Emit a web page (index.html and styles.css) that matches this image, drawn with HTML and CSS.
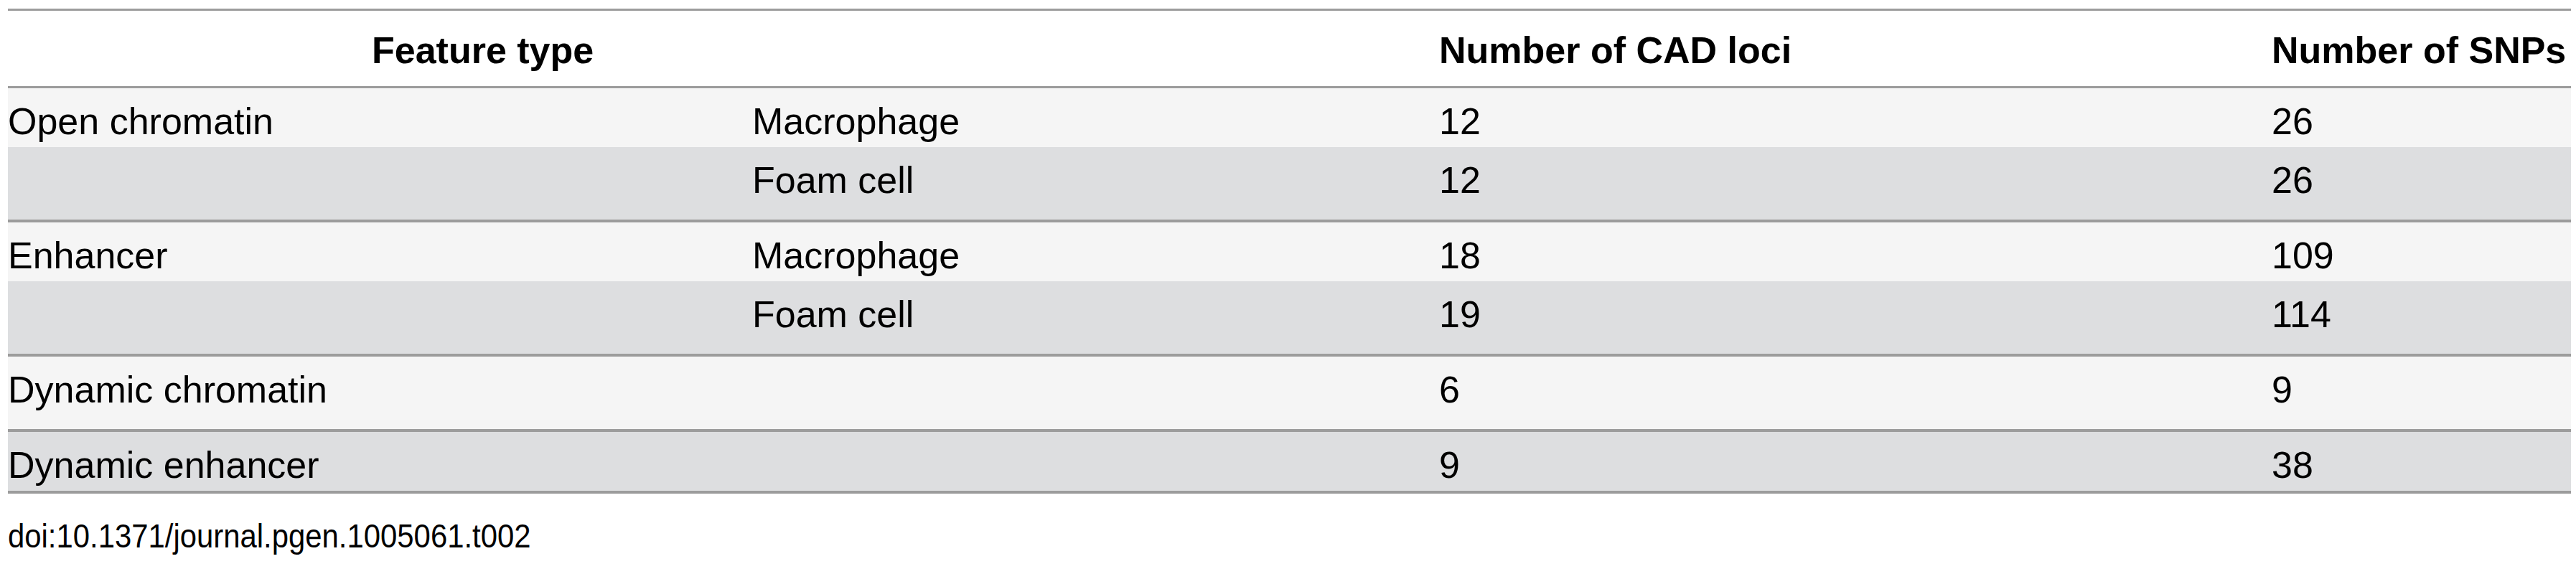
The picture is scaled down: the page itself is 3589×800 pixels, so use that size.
FILE: index.html
```html
<!DOCTYPE html>
<html lang="en">
<head>
<meta charset="utf-8">
<title>Table 2</title>
<link rel="stylesheet" href="styles.css">
</head>
<body>
<div class="figure">
  <table class="data">
    <colgroup>
      <col class="c1">
      <col class="c2">
      <col class="c3">
      <col class="c4">
    </colgroup>
    <thead>
      <tr>
        <th class="feature" colspan="2">Feature type</th>
        <th>Number of CAD loci</th>
        <th>Number of SNPs</th>
      </tr>
    </thead>
    <tbody>
      <tr class="light">
        <td>Open chromatin</td>
        <td>Macrophage</td>
        <td>12</td>
        <td>26</td>
      </tr>
      <tr class="dark end">
        <td></td>
        <td>Foam cell</td>
        <td>12</td>
        <td>26</td>
      </tr>
      <tr class="light">
        <td>Enhancer</td>
        <td>Macrophage</td>
        <td>18</td>
        <td>109</td>
      </tr>
      <tr class="dark end">
        <td></td>
        <td>Foam cell</td>
        <td>19</td>
        <td>114</td>
      </tr>
      <tr class="light end">
        <td>Dynamic chromatin</td>
        <td></td>
        <td>6</td>
        <td>9</td>
      </tr>
      <tr class="dark last">
        <td>Dynamic enhancer</td>
        <td></td>
        <td>9</td>
        <td>38</td>
      </tr>
    </tbody>
  </table>
  <p class="doi">doi:10.1371/journal.pgen.1005061.t002</p>
</div>
</body>
</html>
```
FILE: styles.css
```css
html, body {
  margin: 0;
  padding: 0;
  background: #ffffff;
}

body {
  font-family: "Liberation Sans", Arial, sans-serif;
  color: #000000;
}

.figure {
  padding: 12px 0 0 11px;
  width: 3571px;
}

.data {
  width: 3571px;
  table-layout: fixed;
  border-collapse: collapse;
  font-size: 52px;
  line-height: 60px;
}

.c1 { width: 1037px; }
.c2 { width: 957px; }
.c3 { width: 1160px; }
.c4 { width: 417px; }

.data thead tr {
  background: #ffffff;
  border-top: 3px solid #9c9c9c;
  border-bottom: 3px solid #9c9c9c;
}

.data th {
  padding: 25px 0 20px 0;
  font-weight: bold;
  text-align: left;
  white-space: nowrap;
}

.data th.feature {
  padding-left: 507px;
}

.data td {
  padding: 16px 0 6px 0;
  font-weight: normal;
  text-align: left;
  white-space: nowrap;
  height: 60px;
}

.light { background: #f5f5f5; }
.dark { background: #dddee0; }

.end td { padding-bottom: 25px; }
.end, .last { border-bottom: 4px solid #9c9c9c; }

.doi {
  margin: 33px 0 0 0;
  font-size: 46px;
  line-height: 53px;
  transform: scaleX(0.91);
  transform-origin: left center;
  white-space: nowrap;
}
```
